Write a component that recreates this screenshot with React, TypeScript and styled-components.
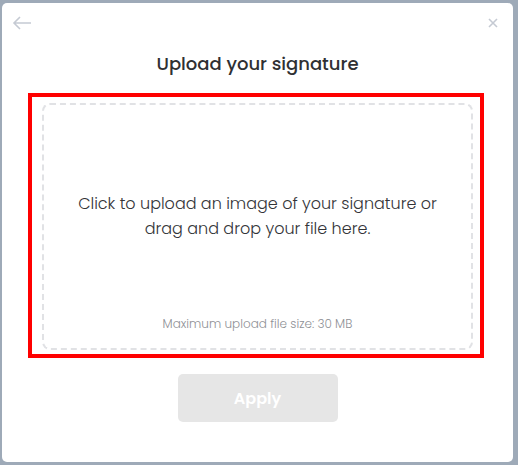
import React from "react";
import styled, { createGlobalStyle } from "styled-components";

const GlobalStyle = createGlobalStyle`
  html, body {
    margin: 0;
    padding: 0;
    background: #9eaab8;
  }
  body {
    font-family: "Poppins", "Open Sans", "Liberation Sans", sans-serif;
  }
`;

const Page = styled.div`
  width: 518px;
  height: 465px;
  padding: 3px 5px 3px 2px;
  box-sizing: border-box;
`;

const Modal = styled.div`
  width: 511px;
  height: 459px;
  background: #ffffff;
  border-radius: 5px;
  display: flex;
  flex-direction: column;
  align-items: center;
  position: relative;
`;

const IconButton = styled.button<{ $side: "left" | "right" }>`
  position: absolute;
  top: 10px;
  ${(p) => (p.$side === "left" ? "left: 8px;" : "right: 8px;")}
  width: 24px;
  height: 20px;
  padding: 0;
  border: none;
  background: none;
  display: flex;
  align-items: center;
  justify-content: center;
  color: #c5cad3;
  cursor: pointer;
`;

const Title = styled.h2`
  margin: 50px 0 18px;
  font-size: 18px;
  font-weight: 500;
  color: #2f3033;
  line-height: 22px;
`;

const Highlight = styled.div`
  margin-left: -3px;
  border: 4px solid #ff0000;
  padding: 6px 7px 4px 10px;
`;

const DropZone = styled.div`
  width: 431px;
  height: 247px;
  box-sizing: border-box;
  border: 2px dashed #e1e2e5;
  border-radius: 8px;
  display: flex;
  flex-direction: column;
  align-items: center;
  cursor: pointer;
`;

const DropText = styled.p`
  margin: 86px 0 0;
  font-size: 16px;
  font-weight: 300;
  line-height: 25px;
  color: #333438;
  text-align: center;
`;

const Hint = styled.span`
  margin-top: auto;
  margin-bottom: 15px;
  font-size: 12px;
  font-weight: 300;
  color: #8f9196;
`;

const ApplyButton = styled.button`
  margin-top: 16px;
  width: 160px;
  height: 48px;
  border: none;
  border-radius: 5px;
  background: #e6e6e6;
  color: #ffffff;
  font-family: inherit;
  font-size: 16px;
  font-weight: 600;
`;

export default function App() {
  return (
    <>
      <GlobalStyle />
      <Page>
        <Modal>
          <IconButton $side="left" aria-label="Back">
            <svg width="20" height="14" viewBox="0 0 20 14" fill="none" stroke="currentColor" strokeWidth="1.6">
              <path d="M19 7H2M8 1L2 7l6 6" />
            </svg>
          </IconButton>
          <IconButton $side="right" aria-label="Close">
            <svg width="10" height="10" viewBox="0 0 10 10" stroke="currentColor" strokeWidth="1.6">
              <path d="M1 1l8 8M9 1l-8 8" />
            </svg>
          </IconButton>
          <Title>Upload your signature</Title>
          <Highlight>
            <DropZone>
              <DropText>
                Click to upload an image of your signature or
                <br />
                drag and drop your file here.
              </DropText>
              <Hint>Maximum upload file size: 30 MB</Hint>
            </DropZone>
          </Highlight>
          <ApplyButton disabled>Apply</ApplyButton>
        </Modal>
      </Page>
    </>
  );
}
